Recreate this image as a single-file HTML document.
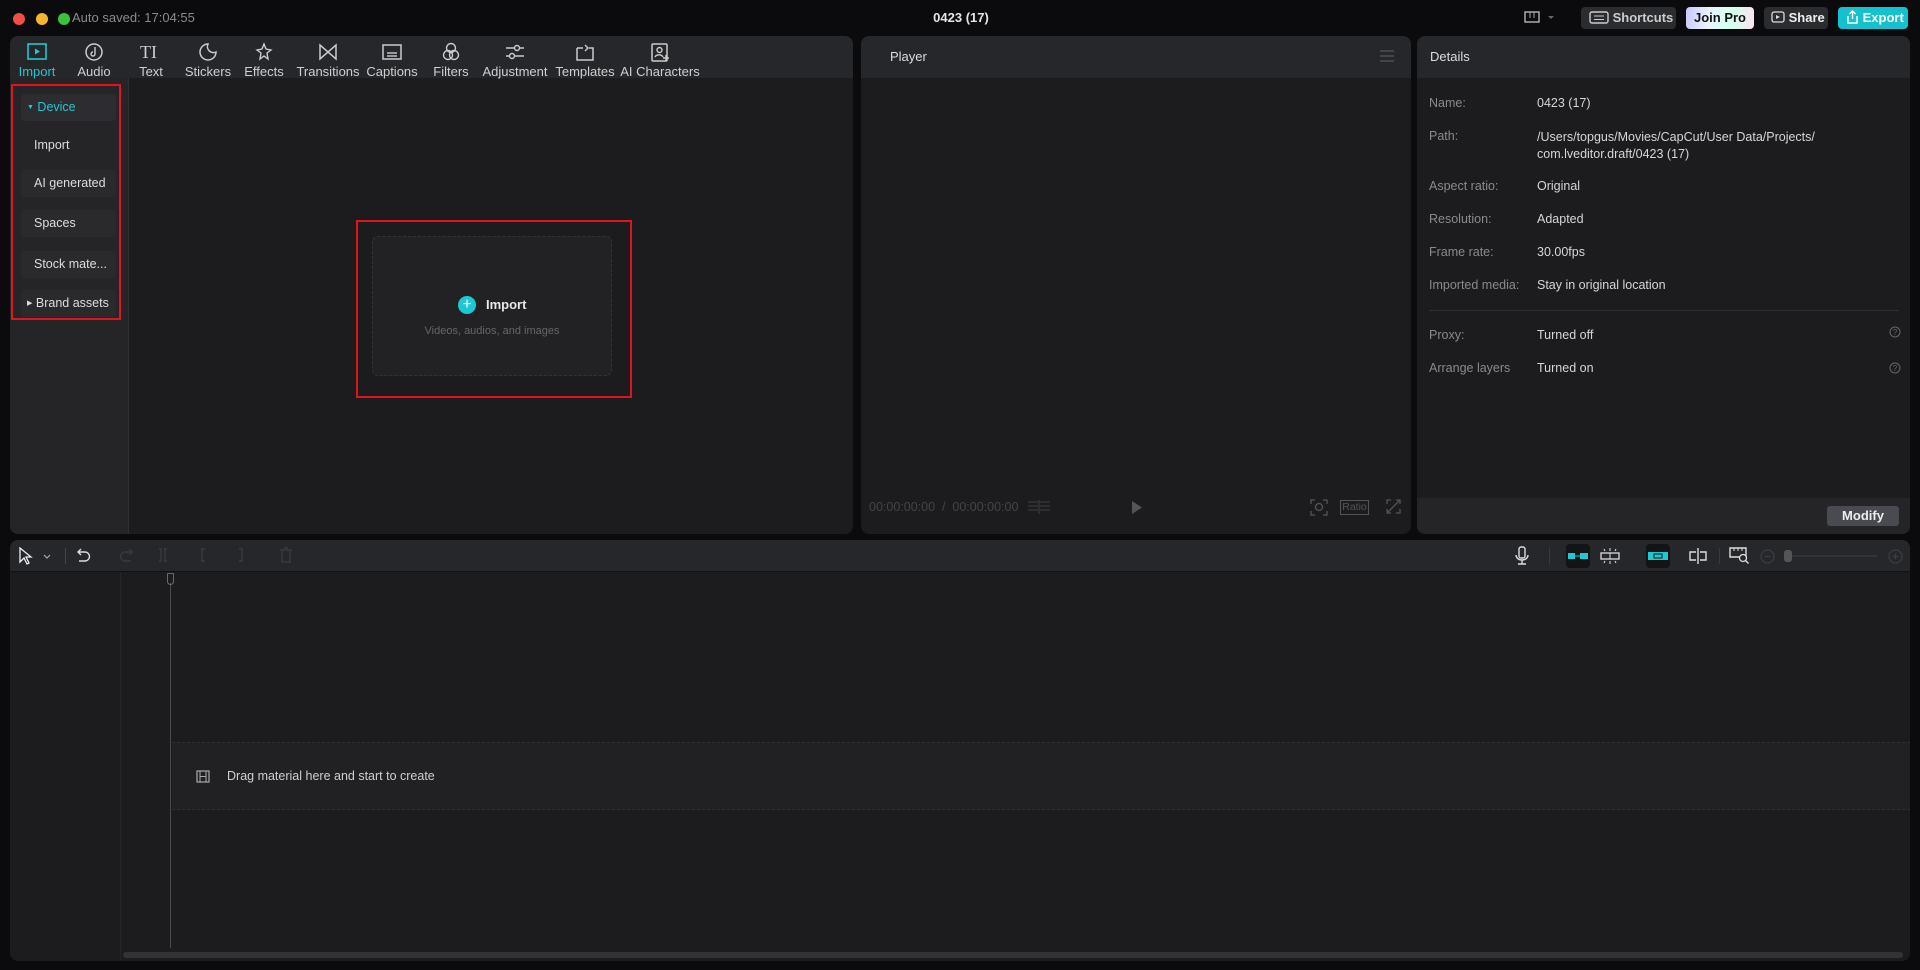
<!DOCTYPE html>
<html><head><meta charset="utf-8"><style>
*{box-sizing:border-box;margin:0;padding:0}
body{width:1920px;height:970px;background:#0b0b0d;font-family:"Liberation Sans",sans-serif;color:#d8d8d8;position:relative;overflow:hidden;font-size:13px}
.a{position:absolute}
.panel{position:absolute;background:#1c1c1e;border-radius:8px;overflow:hidden}
.hdr{background:#26272b}
.tab{position:absolute;top:0;width:70px;text-align:center;font-size:13px;color:#cfcfcf}
.tab svg{display:block;margin:6px auto 2px}
.side{position:absolute;left:21px;width:95px;height:27px;background:#2a2a2d;border-radius:4px;font-size:12.5px;color:#ddd;line-height:27px;padding-left:13px}
.lbl{position:absolute;left:1429px;color:#8a8a8a;font-size:12.5px}
.val{position:absolute;left:1537px;color:#d6d6d6;font-size:12.5px}
.btn{position:absolute;top:7px;height:22px;border-radius:4px;font-size:13px;line-height:22px;font-weight:bold}
</style></head><body>
<!-- title bar -->
<div class="a" style="left:13px;top:13px;width:12px;height:12px;border-radius:6px;background:#ee4f47"></div>
<div class="a" style="left:36px;top:13px;width:12px;height:12px;border-radius:6px;background:#f5b52c"></div>
<div class="a" style="left:58px;top:13px;width:12px;height:12px;border-radius:6px;background:#3ac23a"></div>
<div class="a" style="left:72px;top:10px;font-size:13px;color:#8a8a8a">Auto saved: 17:04:55</div>
<div class="a" style="left:900px;top:10px;width:122px;text-align:center;font-size:13px;font-weight:bold;color:#e6e6e6">0423 (17)</div>
<svg class="a" style="left:1524px;top:11px" width="34" height="14"><rect x="1" y="1" width="14" height="10" fill="none" stroke="#aaa" stroke-width="1.5"/><line x1="6" y1="1" x2="6" y2="7" stroke="#aaa"/><line x1="10" y1="1" x2="10" y2="7" stroke="#aaa"/><path d="M24 5l3 3 3-3z" fill="#666"/></svg>
<div class="btn" style="left:1581px;width:95px;background:#2b2c30;color:#ccc;padding-left:8px"><svg width="20" height="13" style="vertical-align:-2px"><rect x="1" y="1" width="18" height="11" rx="2" fill="none" stroke="#ccc" stroke-width="1.4"/><line x1="5" y1="5" x2="15" y2="5" stroke="#ccc"/><line x1="5" y1="8.5" x2="15" y2="8.5" stroke="#ccc"/></svg> Shortcuts</div>
<div class="btn" style="left:1686px;width:68px;background:linear-gradient(100deg,#c9c6ff,#e9f5ff,#d6ffee,#ffe2f0);color:#111;text-align:center">Join Pro</div>
<div class="btn" style="left:1764px;width:64px;background:#2b2c30;color:#eee;padding-left:7px"><svg width="14" height="13" style="vertical-align:-2px"><rect x="1" y="1" width="12" height="10" rx="2" fill="none" stroke="#ddd" stroke-width="1.3"/><path d="M5 4l4 2-4 2z" fill="#ddd"/></svg> Share</div>
<div class="btn" style="left:1838px;width:70px;background:#15c1cc;color:#fff;padding-left:7px"><svg width="14" height="14" style="vertical-align:-2px"><path d="M3 6v7h9V6M7.5 9V1M4.5 4l3-3 3 3" fill="none" stroke="#fff" stroke-width="1.4"/></svg> Export</div>

<!-- left panel -->
<div class="panel" style="left:10px;top:36px;width:843px;height:498px">
 <div class="hdr" style="position:absolute;left:0;top:0;width:843px;height:42px"></div>
 <div style="position:absolute;left:0;top:42px;width:119px;height:456px;background:#252528;border-right:1px solid #303033"></div>
</div>
<div class="tab" style="left:2px;top:36px;color:#1ec8d2"><svg width="24" height="20"><rect x="3" y="2" width="18" height="15" fill="none" stroke="#1ec8d2" stroke-width="1.6"/><path d="M10 6.5l5 3-5 3z" fill="#1ec8d2"/></svg>Import</div>
<div class="tab" style="left:59px;top:36px"><svg width="24" height="20"><circle cx="12" cy="10" r="8" fill="none" stroke="#ccc" stroke-width="1.5"/><path d="M13 5v7M13 12a2 2 0 1 1-2-2" fill="none" stroke="#ccc" stroke-width="1.4"/></svg>Audio</div>
<div class="tab" style="left:116px;top:36px"><svg width="24" height="20"><text x="1" y="16" font-family="Liberation Serif" font-size="18" fill="#ccc">TI</text></svg>Text</div>
<div class="tab" style="left:173px;top:36px"><svg width="24" height="20"><path d="M12 2a8 8 0 1 0 8 8A6 6 0 0 1 12 2z" fill="none" stroke="#ccc" stroke-width="1.5"/></svg>Stickers</div>
<div class="tab" style="left:229px;top:36px"><svg width="24" height="20"><path d="M12 2l2 5 5 1-4 3 1 6-4-3-4 3 1-6-4-3 5-1z" fill="none" stroke="#ccc" stroke-width="1.4"/></svg>Effects</div>
<div class="tab" style="left:293px;top:36px"><svg width="24" height="20"><path d="M4 3v14l16-14v14z" fill="none" stroke="#ccc" stroke-width="1.5"/></svg>Transitions</div>
<div class="tab" style="left:357px;top:36px"><svg width="24" height="20"><rect x="3" y="3" width="18" height="14" fill="none" stroke="#ccc" stroke-width="1.5"/><line x1="7" y1="11" x2="17" y2="11" stroke="#ccc" stroke-width="1.4"/><line x1="7" y1="14" x2="17" y2="14" stroke="#ccc" stroke-width="1.4"/></svg>Captions</div>
<div class="tab" style="left:416px;top:36px"><svg width="24" height="20"><circle cx="12" cy="6" r="4.5" fill="none" stroke="#ccc" stroke-width="1.4"/><circle cx="9" cy="13" r="4.5" fill="none" stroke="#ccc" stroke-width="1.4"/><circle cx="15" cy="13" r="4.5" fill="none" stroke="#ccc" stroke-width="1.4"/></svg>Filters</div>
<div class="tab" style="left:480px;top:36px"><svg width="24" height="20"><path d="M3 6h18M3 14h18" stroke="#ccc" stroke-width="1.4"/><circle cx="14" cy="6" r="2.5" fill="#26272b" stroke="#ccc" stroke-width="1.4"/><circle cx="9" cy="14" r="2.5" fill="#26272b" stroke="#ccc" stroke-width="1.4"/></svg>Adjustment</div>
<div class="tab" style="left:550px;top:36px"><svg width="24" height="20"><path d="M4 6h6M16 6h4v12H4V6" fill="none" stroke="#ccc" stroke-width="1.5"/><path d="M12 3l3 3-3 3" fill="none" stroke="#ccc" stroke-width="1.4"/></svg>Templates</div>
<div class="tab" style="left:615px;top:36px;width:90px"><svg width="24" height="20"><rect x="4" y="2" width="15" height="17" rx="1" fill="none" stroke="#ccc" stroke-width="1.5"/><circle cx="11.5" cy="8" r="2.5" fill="none" stroke="#ccc" stroke-width="1.4"/><path d="M7 15a4.5 4 0 0 1 8 0M18 13v6M15 16h6" fill="none" stroke="#ccc" stroke-width="1.4"/></svg>AI Characters</div>

<div class="side" style="top:94px;background:#2d2d31;color:#1ec8d2;padding-left:6px"><span style="font-size:7px;vertical-align:2px">▼</span> Device</div>
<div class="side" style="top:132px;background:transparent">Import</div>
<div class="side" style="top:170px">AI generated</div>
<div class="side" style="top:210px">Spaces</div>
<div class="side" style="top:251px">Stock mate...</div>
<div class="side" style="top:290px;padding-left:6px"><span style="font-size:7px;vertical-align:2px">▶</span> Brand assets</div>
<div class="a" style="left:11px;top:84px;width:110px;height:236px;border:2px solid #e0141e"></div>

<div class="a" style="left:372px;top:236px;width:240px;height:140px;background:#222224;border:1px dashed #333;border-radius:6px"></div>
<div class="a" style="left:458px;top:296px;width:18px;height:18px;border-radius:9px;background:#1ec8d2;color:#fff;text-align:center;line-height:17px;font-size:16px">+</div>
<div class="a" style="left:486px;top:297px;font-size:13px;font-weight:bold;color:#e8e8e8">Import</div>
<div class="a" style="left:372px;top:325px;width:240px;text-align:center;font-size:11px;color:#666">Videos, audios, and images</div>
<div class="a" style="left:356px;top:220px;width:276px;height:178px;border:2px solid #e0141e"></div>

<!-- player -->
<div class="panel" style="left:861px;top:36px;width:550px;height:498px">
 <div class="hdr" style="height:42px;padding:13px 29px 0 29px 0;padding-left:29px;padding-top:13px;color:#ddd;font-size:13px">Player</div>
</div>
<svg class="a" style="left:1380px;top:50px" width="14" height="12"><path d="M0 1h14M0 6h14M0 11h14" stroke="#555" stroke-width="1.3"/></svg>
<div class="a" style="left:869px;top:500px;font-size:12.5px;color:#444">00:00:00:00 &nbsp;/ &nbsp;00:00:00:00</div>
<svg class="a" style="left:1028px;top:500px" width="22" height="14"><path d="M0 2h22M0 6h22M0 10h22M11 0v14" stroke="#2e2e30" stroke-width="2"/></svg>
<svg class="a" style="left:1131px;top:501px" width="12" height="13"><path d="M1 0l10 6.5L1 13z" fill="#555"/></svg>
<svg class="a" style="left:1310px;top:499px" width="18" height="17"><path d="M1 5V1h4M13 1h4v4M17 12v4h-4M5 16H1v-4" fill="none" stroke="#555" stroke-width="1.3"/><circle cx="9" cy="8" r="3.5" fill="none" stroke="#555" stroke-width="1.3"/></svg>
<div class="a" style="left:1340px;top:500px;width:29px;height:15px;border:1px solid #555;font-size:10.5px;color:#555;text-align:center;line-height:13px">Ratio</div>
<svg class="a" style="left:1386px;top:499px" width="15" height="15"><path d="M1 5V1h4M10 1h4v4M14 10v4h-4M5 14H1v-4M2 13l11-11" fill="none" stroke="#555" stroke-width="1.3"/></svg>

<!-- details -->
<div class="panel" style="left:1417px;top:36px;width:493px;height:498px">
 <div class="hdr" style="height:42px;padding-left:13px;padding-top:13px;color:#ddd;font-size:13px">Details</div>
 <div style="position:absolute;left:0;top:462px;width:493px;height:36px;background:#252528"></div>
 <div style="position:absolute;left:12px;top:274px;width:470px;height:1px;background:#2f2f32"></div>
</div>
<div class="lbl" style="top:96px">Name:</div><div class="val" style="top:96px">0423 (17)</div>
<div class="lbl" style="top:129px">Path:</div><div class="val" style="top:129px;line-height:17px">/Users/topgus/Movies/CapCut/User Data/Projects/<br>com.lveditor.draft/0423 (17)</div>
<div class="lbl" style="top:179px">Aspect ratio:</div><div class="val" style="top:179px">Original</div>
<div class="lbl" style="top:212px">Resolution:</div><div class="val" style="top:212px">Adapted</div>
<div class="lbl" style="top:245px">Frame rate:</div><div class="val" style="top:245px">30.00fps</div>
<div class="lbl" style="top:278px">Imported media:</div><div class="val" style="top:278px">Stay in original location</div>
<div class="lbl" style="top:328px">Proxy:</div><div class="val" style="top:328px">Turned off</div>
<div class="lbl" style="top:361px">Arrange layers</div><div class="val" style="top:361px">Turned on</div>
<svg class="a" style="left:1889px;top:326px" width="12" height="12"><circle cx="6" cy="6" r="5" fill="none" stroke="#666"/><text x="6" y="9" font-size="8" text-anchor="middle" fill="#666">?</text></svg>
<svg class="a" style="left:1889px;top:362px" width="12" height="12"><circle cx="6" cy="6" r="5" fill="none" stroke="#666"/><text x="6" y="9" font-size="8" text-anchor="middle" fill="#666">?</text></svg>
<div class="a" style="left:1827px;top:506px;width:72px;height:20px;background:#4a4b50;border-radius:3px;text-align:center;line-height:20px;font-weight:bold;color:#eee;font-size:13px">Modify</div>

<!-- timeline -->
<div class="panel" style="left:10px;top:540px;width:1900px;height:421px">
 <div class="hdr" style="height:32px;border-bottom:1px solid #111"></div>
 <div style="position:absolute;left:110px;top:33px;width:1px;height:388px;background:#262628"></div>
 <div style="position:absolute;left:162px;top:202px;width:1738px;height:68px;background:#212123;border-top:1px dashed #2e2e30;border-bottom:1px dashed #2e2e30"></div>
 <div style="position:absolute;left:113px;top:412px;width:1780px;height:6px;border-radius:3px;background:#333336"></div>
</div>
<svg class="a" style="left:18px;top:547px" width="36" height="18"><path d="M2 1v14l4-4 3 6 2-1-3-6h5z" fill="none" stroke="#eee" stroke-width="1.3"/><path d="M26 8l3 3 3-3" fill="none" stroke="#aaa" stroke-width="1.2"/></svg>
<div class="a" style="left:65px;top:548px;width:1px;height:16px;background:#444"></div>
<svg class="a" style="left:76px;top:547px" width="16" height="16"><path d="M5 2L2 5l3 3M2 5h7a4.5 4.5 0 0 1 0 9H3" fill="none" stroke="#ddd" stroke-width="1.4"/></svg>
<svg class="a" style="left:118px;top:547px" width="180" height="16"><path d="M11 2l3 3-3 3M14 5H7a4.5 4.5 0 0 0 0 9h6" fill="none" stroke="#3a3a3d" stroke-width="1.4"/><path d="M43 2v12M47 2v12M41 2h3M41 14h3M46 2h3M46 14h3" stroke="#3a3a3d" stroke-width="1.4" fill="none"/><path d="M84 2v12M83 2h4M83 14h4" stroke="#3a3a3d" stroke-width="1.4" fill="none"/><path d="M124 2v12M121 2h4M121 14h4" stroke="#3a3a3d" stroke-width="1.4" fill="none"/><path d="M162 3h12M164 3v12h8V3M166 1h4" stroke="#3a3a3d" stroke-width="1.4" fill="none"/></svg>
<!-- right toolbar -->
<svg class="a" style="left:1514px;top:546px" width="16" height="20"><rect x="5" y="1" width="6" height="11" rx="2" fill="none" stroke="#ddd" stroke-width="1.4"/><path d="M2 9a6 5 0 0 0 12 0M8 14v4M4 18h8" fill="none" stroke="#ddd" stroke-width="1.4"/></svg>
<div class="a" style="left:1549px;top:548px;width:1px;height:16px;background:#3a3a3d"></div>
<div class="a" style="left:1566px;top:544px;width:24px;height:24px;background:#141416;border-radius:4px"></div>
<svg class="a" style="left:1568px;top:551px" width="20" height="10"><rect x="0" y="2" width="7" height="6" fill="#1ec8d2"/><rect x="12" y="2" width="8" height="6" fill="#1ec8d2"/><path d="M7 5h5" stroke="#1ec8d2"/></svg>
<svg class="a" style="left:1599px;top:547px" width="22" height="18"><rect x="2" y="6" width="18" height="6" fill="none" stroke="#ddd" stroke-width="1.3"/><path d="M11 6v6M11 1v3M11 14v3M5 2l1 2M17 2l-1 2M5 16l1-2M17 16l-1-2" stroke="#ddd"/></svg>
<div class="a" style="left:1646px;top:544px;width:24px;height:24px;background:#141416;border-radius:4px"></div>
<svg class="a" style="left:1648px;top:551px" width="20" height="10"><rect x="0" y="1" width="20" height="8" fill="#1ec8d2"/><rect x="6" y="3" width="8" height="4" fill="none" stroke="#141416"/></svg>
<svg class="a" style="left:1688px;top:547px" width="20" height="18"><path d="M8 5H2v8h6M12 5h6v8h-6M10 1v16" fill="none" stroke="#ddd" stroke-width="1.4"/></svg>
<div class="a" style="left:1719px;top:548px;width:1px;height:16px;background:#3a3a3d"></div>
<svg class="a" style="left:1729px;top:546px" width="20" height="18"><path d="M1 2h16v9H1z" fill="none" stroke="#ddd" stroke-width="1.4"/><path d="M5 2v3M9 2v3M13 2v3" stroke="#ddd"/><circle cx="14" cy="12" r="3.5" fill="#26272b" stroke="#ddd" stroke-width="1.3"/><path d="M16.5 14.5l3 3" stroke="#ddd" stroke-width="1.4"/></svg>
<svg class="a" style="left:1760px;top:549px" width="15" height="15"><circle cx="7.5" cy="7.5" r="6.5" fill="none" stroke="#3c3c3f" stroke-width="1.3"/><path d="M4.5 7.5h6" stroke="#3c3c3f" stroke-width="1.3"/></svg>
<div class="a" style="left:1784px;top:550px;width:8px;height:12px;border-radius:3px;background:#555"></div>
<div class="a" style="left:1792px;top:555px;width:86px;height:2px;background:#333"></div>
<svg class="a" style="left:1888px;top:549px" width="15" height="15"><circle cx="7.5" cy="7.5" r="6.5" fill="none" stroke="#3c3c3f" stroke-width="1.3"/><path d="M4.5 7.5h6M7.5 4.5v6" stroke="#3c3c3f" stroke-width="1.3"/></svg>
<!-- playhead -->
<div class="a" style="left:170px;top:583px;width:1px;height:365px;background:#4a4a4d"></div>
<div class="a" style="left:167px;top:573px;width:7px;height:12px;border:1.5px solid #6a6a6d;border-radius:1px 1px 4px 4px"></div>
<svg class="a" style="left:196px;top:770px" width="14" height="13"><rect x="1" y="1" width="12" height="11" fill="none" stroke="#aaa" stroke-width="1.2"/><path d="M4 1v11M10 1v11M4 6.5h6" stroke="#aaa"/></svg>
<div class="a" style="left:227px;top:769px;font-size:12.5px;color:#cfcfcf">Drag material here and start to create</div>
</body></html>
